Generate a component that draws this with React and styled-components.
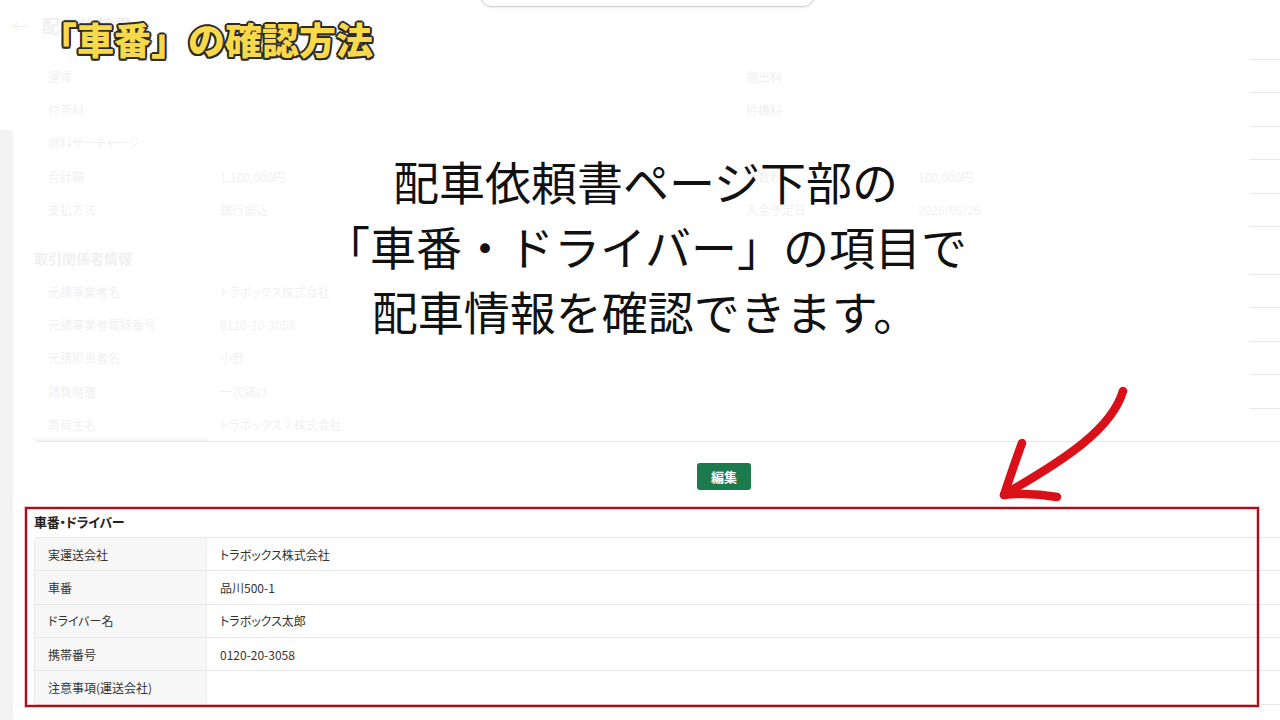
import styled, { createGlobalStyle } from "styled-components";

const GlobalStyle = createGlobalStyle`
  body {
    margin: 0;
    background: #fff;
    font-family: "Noto Sans CJK JP", "Noto Sans", sans-serif;
    font-feature-settings: "palt";
  }
`;

const feeRows = [
  ["運賃", "", "搬出料", ""],
  ["付帯料", "", "待機料", ""],
  ["燃料サーチャージ", "", "", ""],
  ["合計額", "1,100,000円", "手数料", "100,000円"],
  ["支払方法", "銀行振込", "入金予定日", "2026/05/26"],
];

const partyRows = [
  ["元請事業者名", "トラボックス株式会社"],
  ["元請事業者電話番号", "0120-20-3058"],
  ["元請担当者名", "小野"],
  ["請負階層", "一次請け"],
  ["真荷主名", "トラボックス②株式会社"],
];

const driverRows = [
  ["実運送会社", "トラボックス株式会社"],
  ["車番", "品川500-1"],
  ["ドライバー名", "トラボックス太郎"],
  ["携帯番号", "0120-20-3058"],
  ["注意事項(運送会社)", ""],
];

const App = () => {
  return (
    <Root>
      <GlobalStyle />
      <Header>
        <HeaderLeft>
          <Back>←</Back>
          <PageName>配車依頼書</PageName>
        </HeaderLeft>
        <SearchBox />
      </Header>
      <Body>
        <Strip />
        <Main>
          <Table $cols="172px 526px 172px 1fr">
            {feeRows.map((row, i) =>
              row.map((text, j) => (
                <Cell key={`${i}-${j}`} $label={j % 2 === 0}>{text}</Cell>
              ))
            )}
          </Table>
          <SectionHeading>取引関係者情報</SectionHeading>
          <Table $cols="172px 1fr">
            {partyRows.map(([label, value]) => [
              <Cell key={label} $label>{label}</Cell>,
              <Cell key={label + "v"}>{value}</Cell>,
            ])}
          </Table>
          <ActionRow>
            <EditButton>編集</EditButton>
          </ActionRow>
          <SectionTitle>車番・ドライバー</SectionTitle>
          <Table $cols="172px 1fr">
            {driverRows.map(([label, value]) => [
              <Cell key={label} $label>{label}</Cell>,
              <Cell key={label + "v"}>{value}</Cell>,
            ])}
          </Table>
        </Main>
      </Body>

      <Fade>
        <Caption>
          <div>配車依頼書ページ下部の</div>
          <div>「車番・ドライバー」の項目で</div>
          <div>配車情報を確認できます。</div>
        </Caption>
      </Fade>
      <Title>「車番」の確認方法</Title>
      <Highlight />
      <Arrow viewBox="985 375 150 135">
        <path d="M1123 391 C1112 428 1068 458 1005 494" />
        <path d="M1022 443 C1015 462 1009 480 1004 495" />
        <path d="M1004 495 C1022 493 1040 494 1057 497" />
      </Arrow>
    </Root>
  );
};

const Root = styled.div`
  position: relative;
  width: 1280px;
  height: 720px;
  overflow: hidden;
  background: #fff;
`;

const Header = styled.div`
  display: grid;
  grid-template-columns: 480px 335px 1fr;
  height: 59px;
`;

const HeaderLeft = styled.div`
  display: flex;
  align-items: center;
  gap: 14px;
  padding-left: 12px;
  height: 50px;
  color: #333;
`;

const Back = styled.span`
  font-size: 16px;
`;

const PageName = styled.span`
  font-size: 18px;
  font-weight: 700;
`;

const SearchBox = styled.div`
  position: relative;
  z-index: 2;
  margin-top: -30px;
  height: 35px;
  border: 1px solid #d2d2d2;
  border-radius: 12px;
  box-shadow: 0 1px 2px rgba(0, 0, 0, 0.08);
  background: #fff;
`;

const Body = styled.div`
  display: flex;
  min-height: 661px;
`;

const Strip = styled.div`
  width: 13px;
  flex: none;
  background: linear-gradient(#fff 71px, #f3f3f3 71px);
`;

const Main = styled.div`
  width: 1380px;
  flex: none;
  padding-left: 21px;
`;

const Table = styled.div`
  display: grid;
  grid-template-columns: ${(p) => p.$cols};
  border-top: 1px solid #e8e8e8;
  border-left: 1px solid #e8e8e8;
  border-radius: 4px 0 0 4px;
  overflow: hidden;
`;

const Cell = styled.div`
  display: flex;
  align-items: center;
  height: 32.4px;
  padding: 0 13px;
  border-bottom: 1px solid #e8e8e8;
  border-right: ${(p) => (p.$label ? "1px solid #ededed" : "none")};
  background: ${(p) => (p.$label ? "#f7f7f7" : "#fff")};
  font-size: 12px;
  color: #333;
  white-space: nowrap;
`;

const SectionHeading = styled.div`
  margin: 22px 0 6px;
  line-height: 19px;
  font-size: 14px;
  font-weight: 700;
  color: #333;
`;

const ActionRow = styled.div`
  display: flex;
  justify-content: center;
  margin-top: 21px;
`;

const EditButton = styled.button`
  height: 27px;
  padding: 0 14px;
  border: none;
  border-radius: 3px;
  background: #1d7a4c;
  color: #fff;
  font-family: inherit;
  font-size: 13px;
  font-weight: 700;
`;

const SectionTitle = styled.div`
  margin: 24px 0 7px;
  line-height: 16px;
  font-size: 13px;
  font-weight: 700;
  color: #222;
  letter-spacing: -0.3px;
`;

const Fade = styled.div`
  position: absolute;
  z-index: 1;
  top: 0;
  left: 13px;
  width: 1237px;
  height: 438px;
  background: rgba(255, 255, 255, 0.92);
  display: flex;
  justify-content: center;
  padding-top: 148px;
  box-sizing: border-box;
`;

const Caption = styled.div`
  margin-left: 28px;
  text-align: center;
  font-size: 46px;
  line-height: 65px;
  font-weight: 400;
  color: #111;
  font-feature-settings: normal;
`;

const Title = styled.div`
  position: absolute;
  z-index: 3;
  top: 16px;
  left: 40px;
  font-size: 37px;
  line-height: 46px;
  font-weight: 900;
  color: #f8d94a;
  font-feature-settings: normal;
  text-shadow: 2px 0 0 #2b2b2b, -2px 0 0 #2b2b2b, 0 2px 0 #2b2b2b, 0 -2px 0 #2b2b2b,
    1.5px 1.5px 0 #2b2b2b, -1.5px 1.5px 0 #2b2b2b, 1.5px -1.5px 0 #2b2b2b, -1.5px -1.5px 0 #2b2b2b;
`;

const Highlight = styled.div`
  position: absolute;
  z-index: 3;
  top: 507px;
  left: 25px;
  width: 1230px;
  height: 196px;
  border: 2px solid #a90f1a;
  box-shadow: 0 0 0 1px rgba(220, 90, 100, 0.35), inset 0 0 0 1px rgba(220, 90, 100, 0.35);
`;

const Arrow = styled.svg`
  position: absolute;
  z-index: 3;
  left: 985px;
  top: 375px;
  width: 150px;
  height: 135px;
  fill: none;
  stroke: #da1019;
  stroke-width: 8.5;
  stroke-linecap: round;
  stroke-linejoin: round;
`;

export default App;
